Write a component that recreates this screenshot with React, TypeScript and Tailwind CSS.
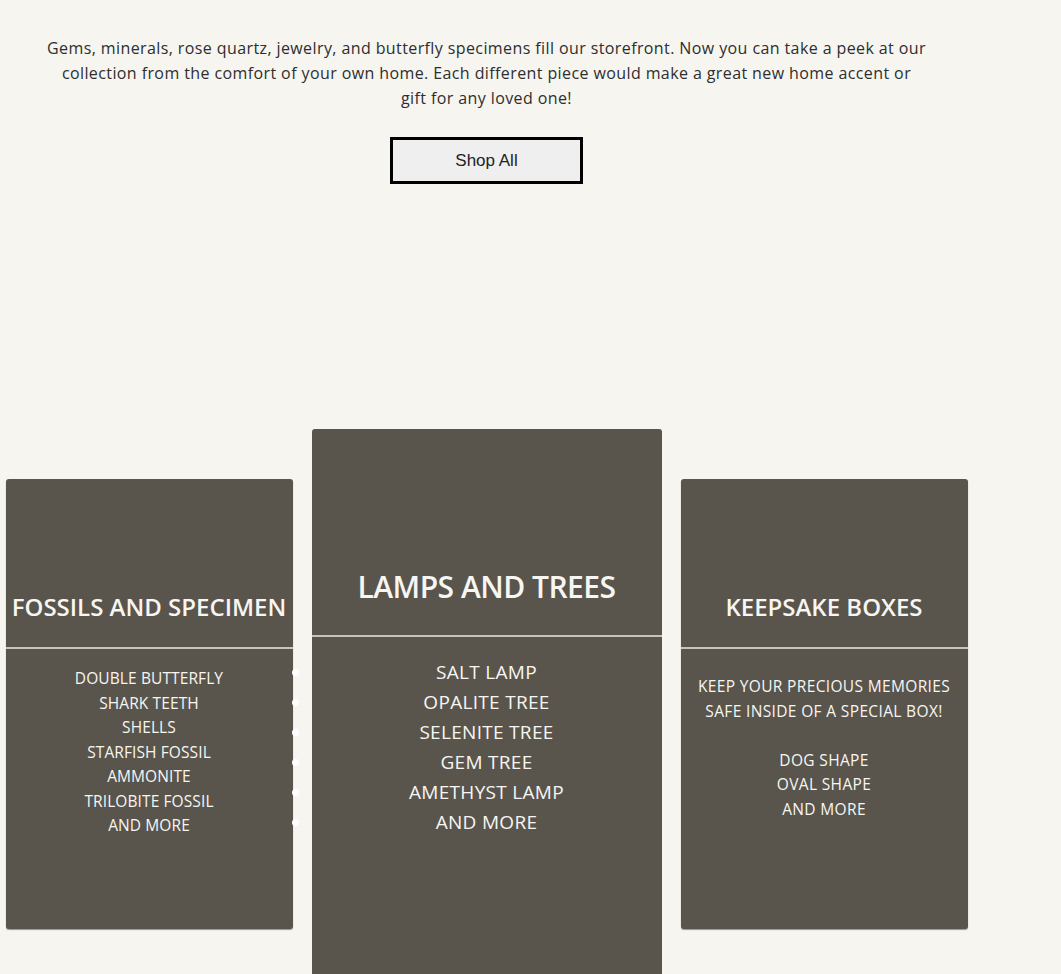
const fossils = [
  "DOUBLE BUTTERFLY",
  "SHARK TEETH",
  "SHELLS",
  "STARFISH FOSSIL",
  "AMMONITE",
  "TRILOBITE FOSSIL",
  "AND MORE",
];

const lamps = [
  "SALT LAMP",
  "OPALITE TREE",
  "SELENITE TREE",
  "GEM TREE",
  "AMETHYST LAMP",
  "AND MORE",
];

const App = () => {
  return (
    <div className="h-[974px] overflow-hidden bg-[#f6f5f0] font-['Open_Sans',sans-serif]">
      <div className="w-[973px] flex flex-col items-center">
        {/* Intro copy */}
        <p className="pt-[36px] text-center text-[16px] leading-[25px] tracking-[0.4px] text-[#2e2e2e]">
          Gems, minerals, rose quartz, jewelry, and butterfly specimens fill our storefront. Now you can take a peek at our
          <br />
          collection from the comfort of your own home. Each different piece would make a great new home accent or
          <br />
          gift for any loved one!
        </p>
        <button className="mt-[26px] w-[193px] h-[47px] border-[3px] border-black bg-[#efefef] font-['Liberation_Sans',Arial,sans-serif] text-[17px] text-[#222222]">
          Shop All
        </button>

        {/* Category cards */}
        <div className="mt-[245px] flex items-center gap-[19px]">
          <div className="w-[287px] h-[450px] rounded-[3px] bg-[#59554d] text-[#f7f6f2] shadow-[0_1px_1px_rgba(150,135,110,0.9)]">
            <div className="h-[168px] flex items-end justify-center pb-[22px]">
              <h2 className="text-[24px] leading-[36px] font-semibold">
                FOSSILS AND SPECIMEN
              </h2>
            </div>
            <div className="border-t-2 border-[#c6c3bd]" />
            <ul className="pt-[17px] text-center text-[15.5px] leading-[24.5px] tracking-[0.1px]">
              {fossils.map((item) => (
                <li key={item}>{item}</li>
              ))}
            </ul>
          </div>

          <div className="w-[350px] h-[550px] rounded-[3px] bg-[#59554d] text-[#f7f6f2]">
            <div className="h-[206px] flex items-end justify-center pb-[26px]">
              <h2 className="text-[30px] leading-[45px] font-semibold tracking-[-0.5px]">
                LAMPS AND TREES
              </h2>
            </div>
            <div className="border-t-2 border-[#c6c3bd]" />
            <ul className="pt-[20px] list-disc text-center text-[19px] leading-[30px] tracking-[0.3px] marker:text-white">
              {lamps.map((item) => (
                <li key={item}>{item}</li>
              ))}
            </ul>
          </div>

          <div className="w-[287px] h-[450px] rounded-[3px] bg-[#59554d] text-[#f7f6f2] shadow-[0_1px_1px_rgba(150,135,110,0.9)]">
            <div className="h-[168px] flex items-end justify-center pb-[22px]">
              <h2 className="text-[24px] leading-[36px] font-semibold">
                KEEPSAKE BOXES
              </h2>
            </div>
            <div className="border-t-2 border-[#c6c3bd]" />
            <div className="pt-[25px] text-center text-[15.5px] leading-[24.5px] tracking-[0.35px]">
              <p>
                KEEP YOUR PRECIOUS MEMORIES
                <br />
                SAFE INSIDE OF A SPECIAL BOX!
              </p>
              <p className="mt-[24.5px]">
                DOG SHAPE
                <br />
                OVAL SHAPE
                <br />
                AND MORE
              </p>
            </div>
          </div>
        </div>
      </div>
    </div>
  );
};

export default App;
